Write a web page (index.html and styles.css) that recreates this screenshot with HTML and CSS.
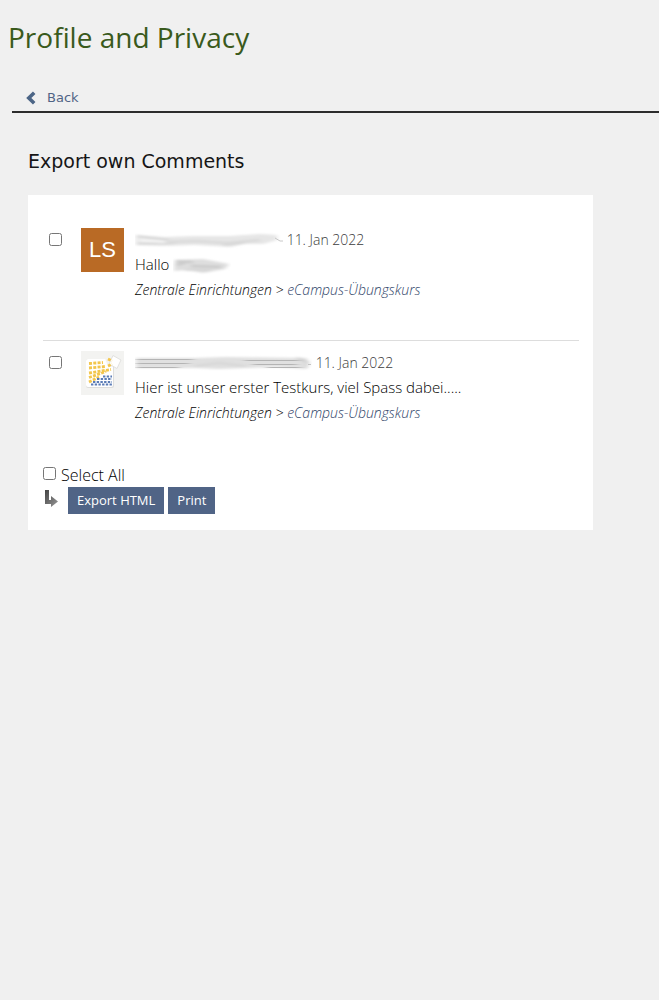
FILE: index.html
```html
<!DOCTYPE html>
<html lang="en">
	<head>
		<meta charset="utf-8">
		<title>Profile and Privacy</title>
		<meta name="viewport" content="width=device-width, initial-scale=1">
		<link rel="stylesheet" href="styles.css">
	</head>
	<body>
		<h1>Profile and Privacy</h1>

		<nav class="tabs">
			<a href="#" class="back">
				<svg width="10" height="14" viewBox="0 0 10 14"><path d="M8.2 1.8 L2.8 7 L8.2 12.2" fill="none" stroke="#4c6586" stroke-width="3.6"/></svg>
				<span>Back</span>
			</a>
		</nav>

		<main>
			<h2>Export own Comments</h2>

			<form class="card">
				<ul class="comments">
					<li class="comment">
						<input type="checkbox" aria-label="Select comment 1">
						<span class="avatar initials">LS</span>
						<div class="body">
							<p class="meta">
								<svg class="smudge" width="148" height="18" viewBox="0 0 148 18">
									<defs><filter id="soft" x="-5%" y="-30%" width="110%" height="160%"><feGaussianBlur stdDeviation="2 0.8"/></filter></defs>
									<g filter="url(#soft)">
										<path d="M1 3 L30 5 L60 4 L95 4 L125 2 L142 3 L142 8 L128 12 L108 12 L96 15 L60 13 L30 14 L1 13 Z" fill="#e6e6e6"/>
										<path d="M2 4 L34 8 M2 12 L40 11 M88 13 L110 11" stroke="#d2d2d2" stroke-width="1.5" fill="none"/>
										<path d="M34 10 L60 9 L92 11 L125 8" stroke="#dadada" stroke-width="2.5" fill="none"/>
										<path d="M4 8 L30 10" stroke="#f8f8f8" stroke-width="2"/>
									</g>
									<path d="M140 6 L145 9 L148 9" stroke="#c8c8c8" stroke-width="1" fill="none"/>
								</svg>
								<time datetime="2022-01-11">11. Jan 2022</time>
							</p>
							<p class="text">Hallo
								<svg class="smudge" width="58" height="18" viewBox="0 0 58 18">
									<g filter="url(#soft)">
										<path d="M2 3 L30 2 L56 7 L52 12 L30 16 L14 13 L1 14 Z" fill="#dedede"/>
										<path d="M3 4 L20 5 M3 8 L12 6 M18 9 L48 10" stroke="#cacaca" stroke-width="2.5" fill="none"/>
										<path d="M12 13 L38 13" stroke="#d2d2d2" stroke-width="1.5"/>
									</g>
								</svg>
							</p>
							<p class="place">Zentrale Einrichtungen &gt; <a href="#">eCampus-Übungskurs</a></p>
						</div>
					</li>
					<li class="comment">
						<input type="checkbox" aria-label="Select comment 2">
						<svg class="avatar" viewBox="0 0 43 44">
							<rect width="43" height="44" fill="#f3f3f1"/>
							<rect x="5" y="8" width="28" height="29" rx="2" fill="#dededc"/>
							<rect x="5" y="8" width="27" height="28" rx="2" fill="#fff"/>
							<path d="M24 7 L26 13 L29 16 L34 15 V7 Z" fill="#f3f3f1"/>
							<path d="M32 4.500 L40 9 L36 17.500 L28 13 Z" fill="#fff" stroke="#e2e2e0" stroke-width="1"/>
							<g fill="none" stroke="#f3c64c" stroke-width="2.800" stroke-dasharray="3 1.300">
								<path d="M8 12.500 L22 11.500"/>
								<path d="M8 17 L24 15.500"/>
								<path d="M8 22 L30 18.500"/>
								<path d="M8 26.500 L25 20.500"/>
								<path d="M8 31 L18 26"/>
								<path d="M27 8 L31 10 M27 15 L31 13"/>
							</g>
							<g fill="none" stroke="#5b7cb6" stroke-width="2.200" stroke-dasharray="2.400 1.300">
								<path d="M22 25.500 H31"/>
								<path d="M16 28 H31"/>
								<path d="M12 31 H31"/>
								<path d="M10 33.500 H31"/>
							</g>
						</svg>
						<div class="body">
							<p class="meta">
								<svg class="smudge" width="177" height="18" viewBox="0 0 177 18">
									<g filter="url(#soft)">
										<path d="M1 3 H60 L90 2 L172 3 L172 14 L140 12 L84 14 L60 13 H1 Z" fill="#e0e0e0"/>
										<path d="M60 11 L84 8 L110 11" stroke="#d6d6d6" stroke-width="2" fill="none"/>
										<path d="M162 3 L173 7 L171 13" stroke="#cccccc" stroke-width="2" fill="none"/>
									</g>
									<g filter="url(#faint)" fill="none" stroke="#b4b4b4">
										<path d="M2 4.500 H58 M2 8.500 H54 M2 12.500 H44 M110 5.500 H164 M118 9.500 H162 M132 12.500 H166"/>
									</g>
									<defs><filter id="faint"><feGaussianBlur stdDeviation="3 0.2"/></filter></defs>
									<path d="M173 9.500 H176" stroke="#c4c4c4" stroke-width="1"/>
								</svg>
								<time datetime="2022-01-11">11. Jan 2022</time>
							</p>
							<p class="text">Hier ist unser erster Testkurs, viel Spass dabei.....</p>
							<p class="place">Zentrale Einrichtungen &gt; <a href="#">eCampus-Übungskurs</a></p>
						</div>
					</li>
				</ul>

				<div class="select-all">
					<input type="checkbox" id="all">
					<label for="all">Select All</label>
				</div>
				<div class="actions">
					<svg width="16" height="18" viewBox="0 0 16 18">
						<defs><linearGradient id="arrow" x1="0" y1="0" x2="1" y2="1"><stop offset="0" stop-color="#444"/><stop offset="1" stop-color="#999"/></linearGradient></defs>
						<path d="M2 1 H6 V11 H8 V7 L15 12.500 L8 18 V15 H2 Z" fill="url(#arrow)"/>
					</svg>
					<button type="button">Export HTML</button>
					<button type="button">Print</button>
				</div>
			</form>
		</main>
	</body>
</html>
```
FILE: styles.css
```css
* { box-sizing: border-box; padding: 0; margin: 0; }
body {
  background: #f0f0f0;
  color: #161616;
  font-family: "Open Sans", sans-serif;
  font-size: 14px;
  line-height: 25px;
}
a { color: #506486; text-decoration: none; }
a:hover { text-decoration: underline; }
h1 {
  padding: 17px 8px 0;
  color: #3a5a1c;
  font-size: 28px;
  font-weight: 400;
  line-height: 40px;
}
.tabs {
  display: flex;
  margin: 27px 0 0 12px;
  padding-left: 14px;
  border-bottom: 2px solid #2c2c2c;
}
.back {
  display: flex;
  align-items: center;
  gap: 11px;
  height: 27px;
  font: 13px "DejaVu Sans", sans-serif;
}
main { padding: 34px 66px 0 28px; }
h2 {
  font: 19px/28px "DejaVu Sans", sans-serif;
}
.card {
  margin-top: 20px;
  padding: 23px 14px 16px 15px;
  background: #fff;
}
.comments { list-style: none; }
.comment {
  display: flex;
  align-items: flex-start;
  padding: 9px 6px 38px;
}
.comment + .comment { border-top: 1px solid #ddd; }
input[type=checkbox] { width: 13px; height: 13px; }
.comment input { margin-top: 6px; }
.avatar {
  flex: none;
  width: 43px;
  height: 44px;
  margin: 1px 11px 0 19px;
}
.initials {
  background: #b96a25;
  color: #fff;
  font: 22px/44px "Liberation Sans", sans-serif;
  text-align: center;
}
.body { flex: 1; }
.meta {
  height: 25px;
  color: #3c3c3c;
  font-weight: 300;
}
.text {
  height: 25px;
  color: #000;
  font-size: 15px;
  font-weight: 300;
}
.place {
  color: #000;
  font-style: italic;
  font-weight: 300;
}
.place a { color: #2f4468; }
.smudge { vertical-align: middle; }
.select-all {
  display: flex;
  align-items: center;
  gap: 5px;
  height: 24px;
  color: #000;
  font-size: 16px;
  font-weight: 300;
}
.select-all input { margin-bottom: 4px; }
.actions {
  display: flex;
  gap: 4px;
}
.actions svg { margin: 2px 5px 0 0; }
button {
  height: 27px;
  padding: 0 9px 1px;
  border: none;
  background: #506486;
  color: #fff;
  font: 13px "Open Sans", sans-serif;
  cursor: pointer;
}
```
